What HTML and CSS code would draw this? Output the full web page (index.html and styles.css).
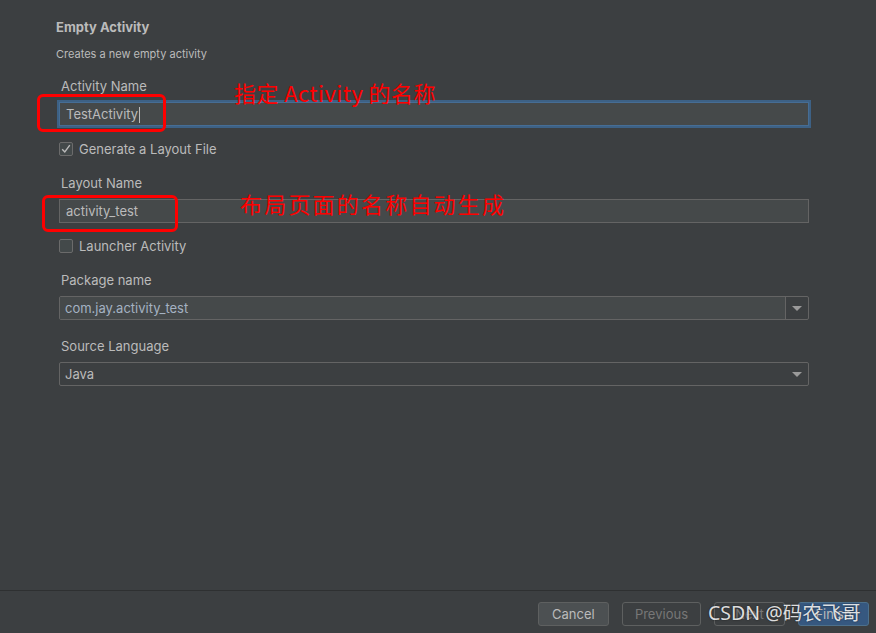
FILE: index.html
```html
<!DOCTYPE html>
<html lang="en">
  <head>
    <meta charset="UTF-8" />
    <meta name="viewport" content="width=device-width, initial-scale=1.0" />
    <title>New Android Activity</title>
    <link rel="stylesheet" href="styles.css">
  </head>
  <body>
    <div class="wizard">
      <div class="content">
        <div class="header">
          <h1>Empty Activity</h1>
          <p>Creates a new empty activity</p>
        </div>

        <div class="form">
          <label class="label">Activity Name</label>
          <div class="field focused">TestActivity<span class="caret"></span></div>

          <div class="check">
            <span class="box">
              <svg width="12" height="12" viewBox="0 0 12 12">
                <path d="M2.2 6.2 L4.8 9 L9.8 2.2" fill="none" stroke="#bbbbbb" stroke-width="1.4" />
              </svg>
            </span>
            Generate a Layout File
          </div>

          <label class="label">Layout Name</label>
          <div class="field">activity_test</div>

          <div class="check">
            <span class="box"></span>
            Launcher Activity
          </div>

          <label class="label">Package name</label>
          <div class="combo editable">
            <div class="combo-text">com.jay.activity_test</div>
            <div class="combo-arrow"><span class="arrow"></span></div>
          </div>

          <label class="label">Source Language</label>
          <div class="combo">
            <div class="combo-text">Java</div>
            <div class="combo-arrow"><span class="arrow"></span></div>
          </div>
        </div>
      </div>

      <div class="footer">
        <button class="btn">Cancel</button>
        <button class="btn disabled">Previous</button>
        <button class="btn disabled">Next</button>
        <button class="btn primary">Finish</button>
      </div>
    </div>

    <!-- annotations drawn over the screenshot -->
    <div class="mark mark-1"></div>
    <div class="mark mark-2"></div>
    <div class="note note-1">指定 Activity 的名称</div>
    <div class="note note-2">布局页面的名称自动生成</div>
    <div class="watermark">CSDN @码农飞哥</div>
  </body>
</html>
```

FILE: styles.css
```css
* {
  margin: 0;
  padding: 0;
  box-sizing: border-box;
  font-family: Inter, "Liberation Sans", Arial, sans-serif;
}

body {
  background: #3c3f41;
  color: #bbbbbb;
  width: 876px;
  height: 633px;
  overflow: hidden;
  position: relative;
}

.wizard {
  display: flex;
  flex-direction: column;
  height: 633px;
}

.content {
  flex: 1;
}

.header {
  padding: 19px 0 0 56px;
}

.header h1 {
  font-size: 13px;
  font-weight: bold;
  line-height: 16px;
}

.header p {
  font-size: 11px;
  line-height: 14px;
  margin-top: 12px;
}

.form {
  width: 750px;
  margin-left: 59px;
  display: flex;
  flex-direction: column;
  font-size: 13px;
}

.label {
  display: block;
  line-height: 16px;
  margin-top: 18px;
  padding-left: 2px;
}

.form .label:first-child {
  margin-top: 17px;
}

.field {
  height: 24px;
  margin-top: 8px;
  padding-left: 6px;
  line-height: 22px;
  background: #45494a;
  border: 1px solid #646464;
  color: #bbbbbb;
}

.field.focused {
  border-color: #466d94;
  box-shadow: 0 0 0 2px #3d6185;
}

.caret {
  display: inline-block;
  width: 1px;
  height: 16px;
  margin-left: 1px;
  vertical-align: -4px;
  background: #bbbbbb;
}

.check {
  display: flex;
  align-items: center;
  gap: 6px;
  height: 16px;
  margin-top: 15px;
  line-height: 16px;
}

.box {
  width: 14px;
  height: 14px;
  border: 1px solid #6b6b6b;
  border-radius: 2px;
  background: #43494a;
  display: flex;
  align-items: center;
  justify-content: center;
}

.combo {
  display: flex;
  height: 24px;
  margin-top: 8px;
  border: 1px solid #646464;
  border-radius: 2px;
}

.combo-text {
  flex: 1;
  padding-left: 5px;
  line-height: 22px;
}

.combo.editable .combo-text {
  background: #45494a;
  color: #a4b2c2;
  border-right: 1px solid #646464;
}

.combo-arrow {
  width: 22px;
  display: flex;
  align-items: center;
  justify-content: center;
}

.arrow {
  width: 0;
  height: 0;
  border-left: 5px solid transparent;
  border-right: 5px solid transparent;
  border-top: 5px solid #9a9a9a;
}

.footer {
  height: 43px;
  border-top: 1px solid #2e3031;
  padding: 11px 7px 0 0;
  display: flex;
  justify-content: flex-end;
  gap: 13px;
}

.btn {
  height: 24px;
  min-width: 71px;
  padding: 0 12px;
  font-size: 13px;
  color: #bbbbbb;
  background: #4c5052;
  border: 1px solid #5e6060;
  border-radius: 3px;
}

.btn.disabled {
  color: #777777;
  background: transparent;
}

.btn.primary {
  background: #365880;
  border-color: #4c708c;
}

.mark {
  position: absolute;
  border: 3px solid #ff0000;
  border-radius: 6px;
}

.mark-1 {
  left: 37px;
  top: 94px;
  width: 129px;
  height: 38px;
}

.mark-2 {
  left: 42px;
  top: 195px;
  width: 136px;
  height: 37px;
}

.note {
  position: absolute;
  color: #ff0000;
  font-size: 22px;
  line-height: 26px;
  font-family: "Noto Sans CJK SC", "Noto Sans", sans-serif;
  white-space: nowrap;
}

.note-1 {
  left: 234px;
  top: 79px;
  letter-spacing: 0.4px;
}

.note-2 {
  left: 240px;
  top: 190px;
  letter-spacing: 2.2px;
}

.watermark {
  position: absolute;
  left: 708px;
  top: 601px;
  font-size: 19.5px;
  line-height: 24px;
  color: rgba(255, 255, 255, 0.85);
  text-shadow: 0 0 2px rgba(0, 0, 0, 0.6);
  font-family: "Noto Sans", "Noto Sans CJK SC", sans-serif;
  white-space: nowrap;
}
```
